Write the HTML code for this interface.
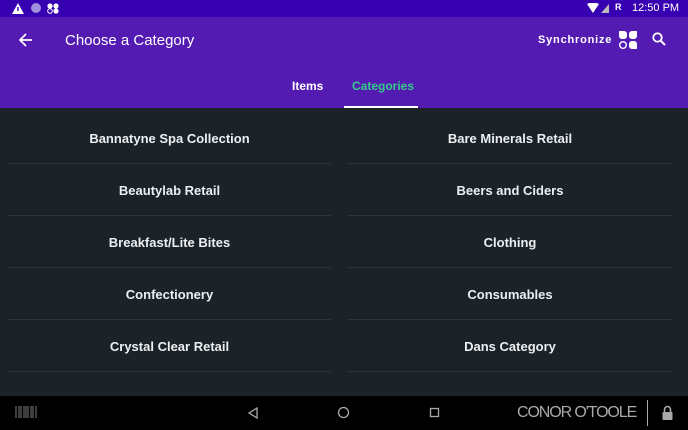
<!DOCTYPE html><html><head><style>
body{margin:0;width:688px;height:430px;overflow:hidden;background:#1b2329;font-family:"Liberation Sans",sans-serif;position:relative}
.sb{position:absolute;top:0;left:0;width:688px;height:17px;background:#3700b0;color:#fff;font-size:11px}
.tb{position:absolute;top:17px;left:0;width:688px;height:91px;background:#541bb3;color:#fff}
.ab{position:absolute}
.cell{position:absolute;height:52px;line-height:55px;text-align:center;color:#eceff1;font-weight:bold;font-size:13px;letter-spacing:0;border-bottom:1px solid #2b343b}
.nav{position:absolute;top:396px;left:0;width:688px;height:34px;background:#000}
</style></head><body>
<div class="sb">
<svg class="ab" style="left:12px;top:3px" width="12" height="11"><path d="M6 0L12 11H0Z" fill="#fff"/><rect x="5.3" y="4" width="1.4" height="4" fill="#3700b0"/></svg>
<div class="ab" style="left:31px;top:3px;width:10px;height:10px;border-radius:50%;background:#a090e0"></div>
<svg class="ab" style="left:47px;top:3px" width="12" height="11"><circle cx="3" cy="3" r="2.6" fill="#fff"/><circle cx="9" cy="3" r="2.6" fill="#fff"/><circle cx="3" cy="8" r="2.3" fill="none" stroke="#fff" stroke-width="1"/><circle cx="9" cy="8" r="2.6" fill="#fff"/></svg>
<svg class="ab" style="left:587px;top:3px" width="26" height="11"><path d="M0 1Q6-2 12 1L6 10Z" fill="#fff"/><path d="M14 10L22 1V10Z" fill="#bbb"/></svg>
<span class="ab" style="left:615px;top:2px;font-size:9px;font-weight:bold">R</span>
<span class="ab" style="left:632px;top:2px;font-size:11px">12:50 PM</span>
</div>
<div class="tb">
<svg class="ab" style="left:19px;top:16px" width="14" height="14"><path d="M13 7H2M7 1L1 7l6 6" stroke="#fff" stroke-width="1.8" fill="none"/></svg>
<span class="ab" style="left:65px;top:15px;font-size:15px">Choose a Category</span>
<span class="ab" style="left:538px;top:17px;font-size:11px;font-weight:bold;letter-spacing:.8px">Synchronize</span>
<svg class="ab" style="left:619px;top:14px" width="18" height="18"><path d="M0 0H5A3 3 0 0 1 8 3V5A3 3 0 0 1 5 8H3A3 3 0 0 1 0 5Z" fill="#fff"/><path d="M18 0H13A3 3 0 0 0 10 3V5A3 3 0 0 0 13 8H15A3 3 0 0 0 18 5Z" fill="#fff"/><circle cx="4" cy="14" r="3.3" fill="none" stroke="#fff" stroke-width="1.4"/><path d="M18 18H13A3 3 0 0 1 10 15V13A3 3 0 0 1 13 10H15A3 3 0 0 1 18 13Z" fill="#fff"/></svg>
<svg class="ab" style="left:652px;top:15px" width="14" height="14"><circle cx="5.5" cy="5.5" r="4.2" stroke="#fff" stroke-width="1.8" fill="none"/><path d="M8.5 8.5L13 13" stroke="#fff" stroke-width="2"/></svg>
<span class="ab" style="left:292px;top:62px;font-size:12px;font-weight:bold">Items</span>
<span class="ab" style="left:352px;top:62px;font-size:12px;font-weight:bold;color:#33cc88">Categories</span>
<div class="ab" style="left:344px;top:89px;width:74px;height:2px;background:#fff"></div>
</div>
<div class="cell" style="left:8px;top:111px;width:323px">Bannatyne Spa Collection</div>
<div class="cell" style="left:348px;top:111px;width:324px">Bare Minerals Retail</div>
<div class="cell" style="left:8px;top:163px;width:323px">Beautylab Retail</div>
<div class="cell" style="left:348px;top:163px;width:324px">Beers and Ciders</div>
<div class="cell" style="left:8px;top:215px;width:323px">Breakfast/Lite Bites</div>
<div class="cell" style="left:348px;top:215px;width:324px">Clothing</div>
<div class="cell" style="left:8px;top:267px;width:323px">Confectionery</div>
<div class="cell" style="left:348px;top:267px;width:324px">Consumables</div>
<div class="cell" style="left:8px;top:319px;width:323px">Crystal Clear Retail</div>
<div class="cell" style="left:348px;top:319px;width:324px">Dans Category</div>
<div class="nav">
<svg class="ab" style="left:15px;top:10px" width="23" height="12"><path d="M1 0v12M4 0v12M6 0v12M9 0v12M11 0v12M13 0v12M16 0v12M18 0v12M21 0v12" stroke="#999" stroke-width="0.8"/></svg>
<svg class="ab" style="left:247px;top:11px" width="12" height="12"><path d="M10 1L2 6l8 5Z" stroke="#aaa" stroke-width="1.3" fill="none"/></svg>
<svg class="ab" style="left:337px;top:10px" width="13" height="13"><circle cx="6.5" cy="6.5" r="5" stroke="#aaa" stroke-width="1.3" fill="none"/></svg>
<svg class="ab" style="left:429px;top:11px" width="12" height="12"><rect x="1.5" y="1.5" width="8" height="8" stroke="#aaa" stroke-width="1.3" fill="none"/></svg>
<span class="ab" style="left:517px;top:8px;font-size:16px;color:#aaa;letter-spacing:-1.1px">CONOR O'TOOLE</span>
<div class="ab" style="left:647px;top:4px;width:1px;height:26px;background:#aaa"></div>
<svg class="ab" style="left:661px;top:9px" width="13" height="15"><path d="M3.5 7V4.5a3 3 0 0 1 6 0V7" stroke="#aaa" stroke-width="1.6" fill="none"/><rect x="1.5" y="7" width="10" height="8" rx="1" fill="#aaa"/></svg>
</div>
</body></html>
